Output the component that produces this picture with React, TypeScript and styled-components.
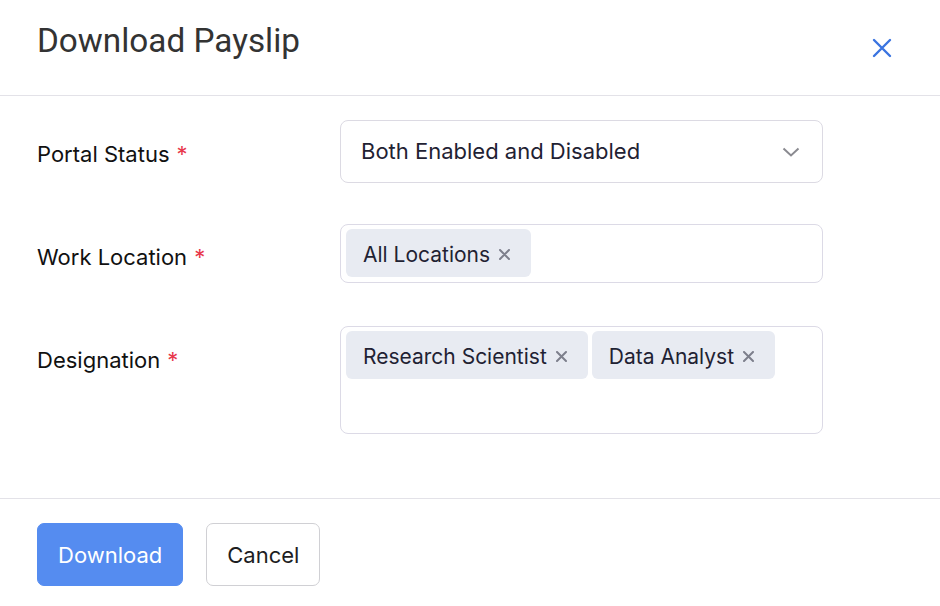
import React from "react";
import styled, { createGlobalStyle } from "styled-components";

const Global = createGlobalStyle`
  html, body { margin: 0; padding: 0; background: #fff; }
  body { font-family: Inter, "Noto Sans", sans-serif; }
  * { box-sizing: border-box; }
`;

const Dialog = styled.div`
  width: 940px;
  height: 606px;
  background: #fff;
  display: flex;
  flex-direction: column;
`;

const Header = styled.header`
  height: 96px;
  border-bottom: 1px solid #e3e2e8;
  display: flex;
  align-items: flex-start;
  justify-content: space-between;
  padding: 0 46px 0 37px;
`;

const Title = styled.h1`
  margin: 21px 0 0;
  font-family: Roboto, "Liberation Sans", sans-serif;
  font-weight: 400;
  font-size: 33.3px;
  color: #333;
`;

const CloseButton = styled.button`
  margin-top: 36px;
  border: none;
  background: none;
  padding: 0;
  width: 24px;
  height: 24px;
  display: flex;
  align-items: center;
  justify-content: center;
  cursor: pointer;
`;

const Body = styled.div`
  flex: 0 0 auto;
  height: 403px;
  border-bottom: 1px solid #e3e2e8;
  padding: 24px 117px 0 37px;
  display: flex;
  flex-direction: column;
  gap: 41px;
`;

const Row = styled.div<{ $align?: string; $mt?: number }>`
  display: grid;
  grid-template-columns: 303px 1fr;
  align-items: ${(p) => p.$align || "center"};
  margin-top: ${(p) => p.$mt || 0}px;
`;

const Label = styled.label<{ $pt?: number }>`
  font-size: 22px;
  color: #111;
  padding-top: ${(p) => p.$pt ?? 4}px;
`;

const Required = styled.span`
  color: #e8374a;
  margin-left: 7px;
`;

const Select = styled.div`
  height: 63px;
  border: 1px solid #dcdae3;
  border-radius: 8px;
  display: flex;
  align-items: center;
  justify-content: space-between;
  padding: 0 22px 2px 20px;
  font-size: 22px;
  color: #1f2233;
`;

const Chevron = styled.svg`
  margin-top: 2px;
`;

const MultiBox = styled.div<{ $h: number }>`
  height: ${(p) => p.$h}px;
  border: 1px solid #dcdae6;
  border-radius: 8px;
  padding: 4px 5px;
  display: flex;
  flex-wrap: wrap;
  align-content: flex-start;
  gap: 4px;
`;

const Chip = styled.span`
  height: 48px;
  background: #e8ebf2;
  border-radius: 6px;
  display: inline-flex;
  align-items: center;
  padding: 2px 21px 0 17px;
  font-size: 21px;
  color: #1f2233;
  gap: 9px;
`;

const ChipX = styled.span`
  display: inline-flex;
`;

const Footer = styled.footer`
  padding: 24px 37px 0;
  display: flex;
  gap: 23px;
`;

const Button = styled.button<{ $primary?: boolean }>`
  height: 63px;
  border-radius: 7px;
  font-family: Inter, sans-serif;
  font-size: 22px;
  padding: 1px 20px 0;
  cursor: pointer;
  border: 1px solid ${(p) => (p.$primary ? "#558cf0" : "#d0d0d4")};
  background: ${(p) => (p.$primary ? "#558cf0" : "#fff")};
  color: ${(p) => (p.$primary ? "#fff" : "#1d1d22")};
`;

const X = () => (
  <svg width="11" height="11" viewBox="0 0 11 11">
    <path d="M1 1L10 10M10 1L1 10" stroke="#7d7f8c" strokeWidth="2" strokeLinecap="round" />
  </svg>
);

export default function App() {
  return (
    <Dialog>
      <Global />
      <Header>
        <Title>Download Payslip</Title>
        <CloseButton aria-label="Close">
          <svg width="20" height="20" viewBox="0 0 20 20">
            <path d="M2 2L18 18M18 2L2 18" stroke="#3a74e0" strokeWidth="2.4" strokeLinecap="round" />
          </svg>
        </CloseButton>
      </Header>
      <Body>
        <Row>
          <Label>
            Portal Status<Required>*</Required>
          </Label>
          <Select>
            <span>Both Enabled and Disabled</span>
            <Chevron width="18" height="10" viewBox="0 0 18 10">
              <path d="M1.5 1.5L9 8.5L16.5 1.5" fill="none" stroke="#8a8a90" strokeWidth="2" />
            </Chevron>
          </Select>
        </Row>
        <Row>
          <Label $pt={7}>
            Work Location<Required>*</Required>
          </Label>
          <MultiBox $h={59}>
            <Chip>
              All Locations<ChipX><X /></ChipX>
            </Chip>
          </MultiBox>
        </Row>
        <Row $align="start" $mt={2}>
          <Label $pt={21}>
            Designation<Required>*</Required>
          </Label>
          <MultiBox $h={108}>
            <Chip>
              Research Scientist<ChipX><X /></ChipX>
            </Chip>
            <Chip>
              Data Analyst<ChipX><X /></ChipX>
            </Chip>
          </MultiBox>
        </Row>
      </Body>
      <Footer>
        <Button $primary>Download</Button>
        <Button>Cancel</Button>
      </Footer>
    </Dialog>
  );
}
